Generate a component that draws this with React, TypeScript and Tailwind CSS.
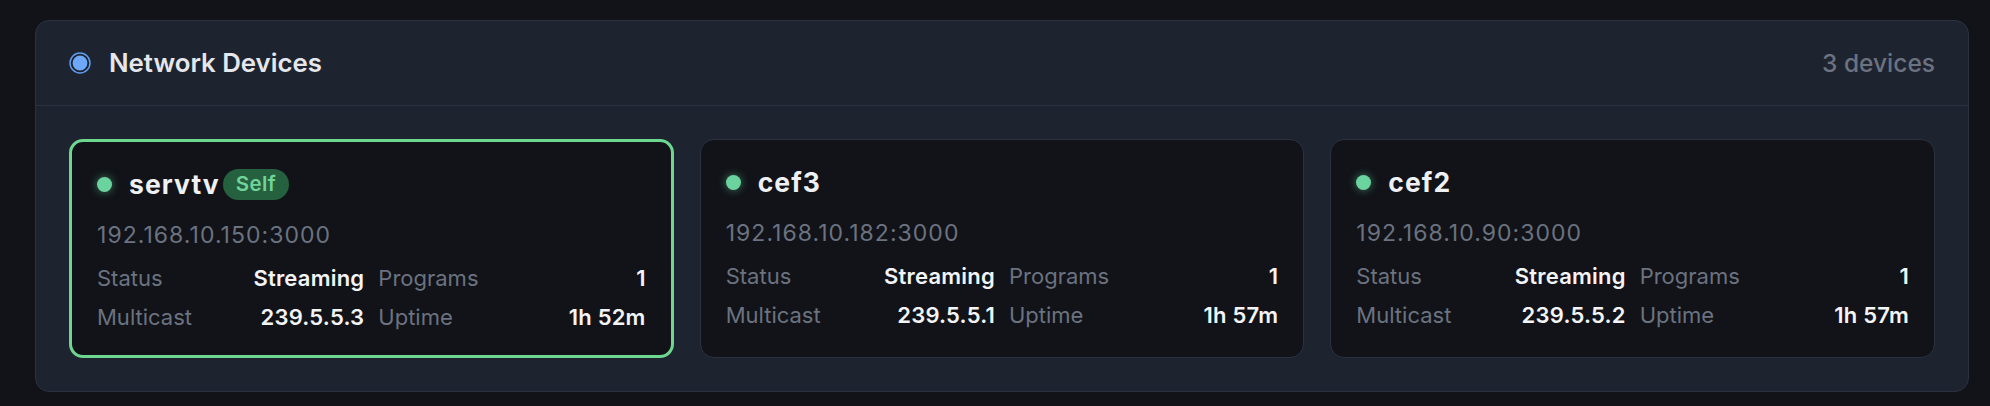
type Device = {
  name: string;
  address: string;
  status: string;
  programs: number;
  multicast: string;
  uptime: string;
  self?: boolean;
};

const devices: Device[] = [
  { name: 'servtv', address: '192.168.10.150:3000', status: 'Streaming', programs: 1, multicast: '239.5.5.3', uptime: '1h 52m', self: true },
  { name: 'cef3', address: '192.168.10.182:3000', status: 'Streaming', programs: 1, multicast: '239.5.5.1', uptime: '1h 57m' },
  { name: 'cef2', address: '192.168.10.90:3000', status: 'Streaming', programs: 1, multicast: '239.5.5.2', uptime: '1h 57m' },
];

function Stat({ label, value }: { label: string; value: string | number }) {
  return (
    <div className="flex items-center justify-between">
      <span className="text-[#6b7280]">{label}</span>
      <span className="font-semibold tracking-[0.01em] text-[#f3f4f6]">{value}</span>
    </div>
  );
}

function DeviceCard({ device }: { device: Device }) {
  return (
    <div
      className={`rounded-[14px] bg-[#111318] p-[25px] pb-[23px] ${
        device.self ? 'border-[3px] border-[#6dd68f]' : 'border border-[#2b3140]'
      }`}
    >
      <div className="flex h-[35px] items-center">
        <span className="h-[15px] w-[15px] shrink-0 rounded-full bg-[#6bd39e] shadow-[0_0_8px_rgba(107,211,158,0.55)]" />
        <span className="ml-[17px] text-[26.5px] font-bold leading-[35px] tracking-[0.04em] text-[#eef0f3]">{device.name}</span>
        {device.self && (
          <span className="ml-[3px] flex h-[31px] items-center rounded-full bg-[#25603f] px-[13px] text-[20.5px] font-semibold tracking-[0.02em] text-[#6fd49a]">
            Self
          </span>
        )}
      </div>
      <p className="mt-[18px] text-[23px] leading-[30px] tracking-[0.045em] text-[#6b7280]">{device.address}</p>
      <div className="mt-[13px] grid grid-cols-2 gap-x-[14px] gap-y-[9px] text-[22px] leading-[30px]">
        <Stat label="Status" value={device.status} />
        <Stat label="Programs" value={device.programs} />
        <Stat label="Multicast" value={device.multicast} />
        <Stat label="Uptime" value={device.uptime} />
      </div>
    </div>
  );
}

export default function App() {
  return (
    <div className="min-h-screen bg-[#111318] pl-[35px] pt-[20px] font-[Inter,sans-serif]">
      <section className="w-[1934px] rounded-[14px] border border-[#2b3140] bg-[#1e2330]">
        <header className="flex items-center justify-between border-b border-[#2b3140] px-[33px] py-[24px]">
          <div className="flex h-[36px] items-center gap-[18px]">
            <svg width="22" height="22" viewBox="0 0 22 22" className="shrink-0">
              <circle cx="11" cy="11" r="10" fill="none" stroke="#5f9cf0" strokeWidth="1.5" />
              <circle cx="11" cy="11" r="7.4" fill="#6ea8fa" />
            </svg>
            <h2 className="text-[25.8px] font-semibold leading-[36px] text-[#e5e7eb]">Network Devices</h2>
          </div>
          <span className="text-[24.5px] font-medium leading-[32px] text-[#6b7280]">3 devices</span>
        </header>
        <div className="grid grid-cols-3 gap-[26px] p-[33px]">
          {devices.map(d => (
            <DeviceCard key={d.name} device={d} />
          ))}
        </div>
      </section>
    </div>
  );
}
